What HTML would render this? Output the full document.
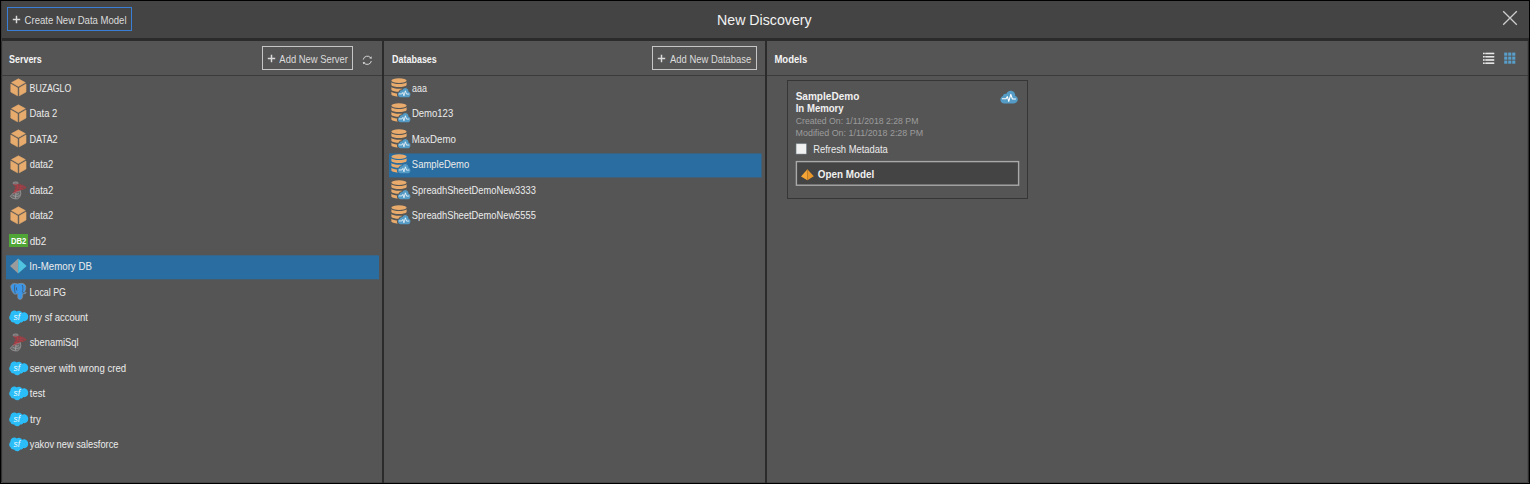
<!DOCTYPE html>
<html lang="en"><head><meta charset="utf-8"><title>New Discovery</title>
<style>
html,body{margin:0;padding:0}
body{width:1530px;height:484px;background:#000;overflow:hidden;position:relative;font-family:"Liberation Sans", sans-serif;}
div,span,svg{position:absolute;box-sizing:border-box}
.t{white-space:pre;line-height:1;transform-origin:0 0;}
.ic{overflow:visible}
.db2{width:19px;height:13px;background:#4fa636}
.db2 span{left:2px;top:3px;font-size:8.5px;line-height:1;font-weight:bold;color:#fff;transform-origin:0 0;transform:scaleX(0.9);white-space:pre}
</style></head>
<body>
<div style="left:1px;top:1px;width:1528px;height:37px;background:#444"></div>
<div style="left:1px;top:38px;width:1528px;height:3px;background:#2b2b2b"></div>
<div style="left:1px;top:41px;width:1527px;height:442px;background:#555"></div>
<div style="left:1px;top:1px;width:1px;height:40px;background:#3a3a3a"></div>
<div style="left:1px;top:41px;width:1px;height:442px;background:#303030"></div>
<div style="left:2px;top:41px;width:1px;height:441px;background:#505050"></div>
<div style="left:1527px;top:41px;width:1px;height:442px;background:#4b4b4b"></div>
<div style="left:1528px;top:41px;width:1px;height:442px;background:#2c2c2c"></div>
<div style="left:1px;top:482px;width:1528px;height:1px;background:#474747"></div>
<div style="left:1px;top:75px;width:1527px;height:1px;background:#3b3b3b"></div>
<div style="left:382px;top:41px;width:2px;height:442px;background:#2b2b2b"></div>
<div style="left:765px;top:41px;width:2px;height:442px;background:#2b2b2b"></div>
<div style="left:0;top:483px;width:1530px;height:1px;background:#000"></div>
<div style="left:7px;top:7px;width:125px;height:24px;border:1px solid #3a7fd6;background:#454545"></div>
<div style="left:262px;top:46px;width:91px;height:24px;border:1px solid #c6c6c6"></div>
<div style="left:652px;top:46px;width:105px;height:24px;border:1px solid #c6c6c6"></div>
<svg class="ic" style="left:12px;top:15.2px" width="9" height="9" viewBox="0 0 9 9"><path d="M4.5 0.8 V8.2 M0.8 4.5 H8.2" stroke="#dadada" stroke-width="1.45" fill="none"/></svg>
<svg class="ic" style="left:267px;top:53.9px" width="9" height="9" viewBox="0 0 9 9"><path d="M4.5 0.8 V8.2 M0.8 4.5 H8.2" stroke="#dadada" stroke-width="1.45" fill="none"/></svg>
<svg class="ic" style="left:657px;top:53.9px" width="9" height="9" viewBox="0 0 9 9"><path d="M4.5 0.8 V8.2 M0.8 4.5 H8.2" stroke="#dadada" stroke-width="1.45" fill="none"/></svg>
<svg class="ic" style="left:362.3px;top:54.6px" width="10.6" height="10.6" viewBox="0 0 12 12"><path d="M1.4 5.2 A4.7 4.7 0 0 1 9.8 3.2 M10.6 6.8 A4.7 4.7 0 0 1 2.2 8.8" fill="none" stroke="#d8d8d8" stroke-width="1.1"/><path d="M8.2 3.6 L11 4.2 L10.8 1.4 Z M3.8 8.4 L1 7.8 L1.2 10.6 Z" fill="#d8d8d8"/></svg>
<svg class="ic" style="left:1502px;top:10px" width="16" height="16" viewBox="0 0 16 16"><path d="M1.2 1.2 L14.8 14.8 M14.8 1.2 L1.2 14.8" stroke="#cdcdcd" stroke-width="1.3" fill="none"/></svg>
<svg class="ic" style="left:1483px;top:52px" width="12" height="12" viewBox="0 0 12 12"><rect x="0" y="0.80" width="11.2" height="1.35" fill="#b8b8b8"/><rect x="0" y="0.80" width="1.3" height="1.35" fill="#e8e8e8"/><rect x="2.6" y="0.80" width="8.6" height="1.35" fill="#e8e8e8"/><rect x="0" y="4.05" width="11.2" height="1.35" fill="#b8b8b8"/><rect x="0" y="4.05" width="1.3" height="1.35" fill="#e8e8e8"/><rect x="2.6" y="4.05" width="8.6" height="1.35" fill="#e8e8e8"/><rect x="0" y="7.30" width="11.2" height="1.35" fill="#b8b8b8"/><rect x="0" y="7.30" width="1.3" height="1.35" fill="#e8e8e8"/><rect x="2.6" y="7.30" width="8.6" height="1.35" fill="#e8e8e8"/><rect x="0" y="10.55" width="11.2" height="1.35" fill="#b8b8b8"/><rect x="0" y="10.55" width="1.3" height="1.35" fill="#e8e8e8"/><rect x="2.6" y="10.55" width="8.6" height="1.35" fill="#e8e8e8"/></svg>
<svg class="ic" style="left:1504px;top:52px" width="12" height="12" viewBox="0 0 12 12"><rect x="0.20" y="0.60" width="3.1" height="3.1" fill="#589fcb"/><rect x="4.20" y="0.60" width="3.1" height="3.1" fill="#589fcb"/><rect x="8.20" y="0.60" width="3.1" height="3.1" fill="#589fcb"/><rect x="0.20" y="4.60" width="3.1" height="3.1" fill="#589fcb"/><rect x="4.20" y="4.60" width="3.1" height="3.1" fill="#589fcb"/><rect x="8.20" y="4.60" width="3.1" height="3.1" fill="#589fcb"/><rect x="0.20" y="8.60" width="3.1" height="3.1" fill="#589fcb"/><rect x="4.20" y="8.60" width="3.1" height="3.1" fill="#589fcb"/><rect x="8.20" y="8.60" width="3.1" height="3.1" fill="#589fcb"/></svg>
<svg class="ic" style="left:0;top:0" width="1530" height="484" viewBox="0 0 1530 484"><rect x="6" y="255.3" width="373" height="24" fill="#2a6da0"/><rect x="389" y="153.45" width="372.5" height="24" fill="#2a6da0"/></svg>
<svg class="ic" style="left:10.3px;top:78.35px" width="17" height="19" viewBox="0 0 17 19"><g fill="#e6ab6d" stroke="#e6ab6d" stroke-width="0.6" stroke-linejoin="round"><path d="M8.4 0.8 L15.3 4.6 L8.4 8.5 L1.5 4.6 Z"/><path d="M0.8 6 L7.5 9.8 V17.8 L0.8 14 Z"/><path d="M9.3 9.8 L16 6 V14 L9.3 17.8 Z"/></g></svg>
<svg class="ic" style="left:10.3px;top:103.8px" width="17" height="19" viewBox="0 0 17 19"><g fill="#e6ab6d" stroke="#e6ab6d" stroke-width="0.6" stroke-linejoin="round"><path d="M8.4 0.8 L15.3 4.6 L8.4 8.5 L1.5 4.6 Z"/><path d="M0.8 6 L7.5 9.8 V17.8 L0.8 14 Z"/><path d="M9.3 9.8 L16 6 V14 L9.3 17.8 Z"/></g></svg>
<svg class="ic" style="left:10.3px;top:129.25px" width="17" height="19" viewBox="0 0 17 19"><g fill="#e6ab6d" stroke="#e6ab6d" stroke-width="0.6" stroke-linejoin="round"><path d="M8.4 0.8 L15.3 4.6 L8.4 8.5 L1.5 4.6 Z"/><path d="M0.8 6 L7.5 9.8 V17.8 L0.8 14 Z"/><path d="M9.3 9.8 L16 6 V14 L9.3 17.8 Z"/></g></svg>
<svg class="ic" style="left:10.3px;top:154.7px" width="17" height="19" viewBox="0 0 17 19"><g fill="#e6ab6d" stroke="#e6ab6d" stroke-width="0.6" stroke-linejoin="round"><path d="M8.4 0.8 L15.3 4.6 L8.4 8.5 L1.5 4.6 Z"/><path d="M0.8 6 L7.5 9.8 V17.8 L0.8 14 Z"/><path d="M9.3 9.8 L16 6 V14 L9.3 17.8 Z"/></g></svg>
<svg class="ic" style="left:10px;top:180.75px" width="18" height="19" viewBox="0 0 18 19"><ellipse cx="5.6" cy="2.1" rx="2.7" ry="1.1" fill="#8a8a8a" fill-opacity="0.45" stroke="#a4a4a4" stroke-width="0.7"/><path d="M3.4 12.2 C1.8 13.4 0.6 14.6 0.3 15.4 C1.6 17.4 4.6 18.2 7.6 17.8 C9.6 16.8 10.8 14.6 10.8 12.4 L10.4 9.6 L6.6 10.6 Z" fill="#9a9a9a" fill-opacity="0.3" stroke="#a2a2a2" stroke-width="0.7"/><path d="M2.6 14.2 C4.6 15.6 7.4 15.8 9.8 14.6 M5.2 12.6 C6.2 13.4 7.8 13.4 9 12.6 M6 11.6 L5.4 17.6" fill="none" stroke="#b0b0b0" stroke-width="0.6"/><path d="M3.2 3.2 C6 3.6 8.6 3.2 8.6 3.2 C11.6 3.6 14.6 4.6 16.4 6.4 C15 7.8 13 8.6 10.6 8.8 C8.6 9.6 6.6 11 5.4 12 L3 12 C4.2 10.4 5.2 8.4 5.4 6.6 C5.4 5.2 4.4 4.2 3.2 3.2 Z" fill="#c42e38" fill-opacity="0.3" stroke="#c8323c" stroke-width="0.5" stroke-opacity="0.75"/><path d="M5.6 4.8 C8.6 4.8 12.4 5.4 15.4 6.6 M5.6 7 C8 6.8 11 7.2 13 8.2 M4.6 9.6 C6.4 9.2 8.4 9.2 9.6 9.4 M7.6 3.6 C8 5.6 7.4 8.4 5.2 11.4 M10.8 4 C11.2 5.8 10.6 7.6 9.4 9.2" fill="none" stroke="#d03641" stroke-width="0.6" stroke-opacity="0.9"/></svg>
<svg class="ic" style="left:10.3px;top:205.6px" width="17" height="19" viewBox="0 0 17 19"><g fill="#e6ab6d" stroke="#e6ab6d" stroke-width="0.6" stroke-linejoin="round"><path d="M8.4 0.8 L15.3 4.6 L8.4 8.5 L1.5 4.6 Z"/><path d="M0.8 6 L7.5 9.8 V17.8 L0.8 14 Z"/><path d="M9.3 9.8 L16 6 V14 L9.3 17.8 Z"/></g></svg>
<div class="db2" style="left:9px;top:234.0px"><span>DB2</span></div>
<svg class="ic" style="left:10px;top:258.0px" width="18" height="16" viewBox="0 0 18 16"><path d="M0 8.1 L8.2 0.4 V15.6 Z" fill="#9b9b9b"/><path d="M8.2 0.4 L16.7 8 L8.2 15.6 Z" fill="#4fc3e0"/></svg>
<svg class="ic" style="left:10px;top:282.95px" width="17" height="17" viewBox="0 0 17 17"><path d="M2.6 0.9 C4.2 0.2 6.2 0.4 7.8 1 C9.8 0.2 12.6 0 14.4 1.2 C16.2 2.6 16 5.4 15.2 7.4 C14.8 8.4 14.4 9 14.2 9.2 C15 9.4 15.8 9.2 16.3 9.6 C15.8 10.8 14.2 11.2 13 10.6 C12.6 12 12.6 13.6 12.2 14.8 C11.8 16.4 9.8 17 8.6 16 C7.6 15.2 7.8 13.4 7.8 12 C7.8 11.4 7.6 10.8 7.4 10.6 C6.4 11.4 4.6 11.4 3.6 10.4 C2.2 8.8 1.2 6.4 0.8 4 C0.6 2.6 1.4 1.4 2.6 0.9 Z" fill="#3a96e9" stroke="#8d9093" stroke-width="0.7"/><path d="M4.9 1.6 C4.3 4 4.5 8 5.3 10.4 M12.2 2 C13.2 4 13 7 12.2 9.2 M12.4 10 L14.4 9.4" fill="none" stroke="#46525f" stroke-width="0.9" stroke-opacity="0.85"/><path d="M6.6 4.4 C6.2 5.6 6.4 6.6 6.8 7.4" fill="none" stroke="#3d4a58" stroke-width="0.9" stroke-opacity="0.8"/></svg>
<svg class="ic" style="left:8.5px;top:309.7px" width="20" height="15" viewBox="0 0 20 15"><path d="M1.6 3.6 C1.8 1.4 4 0 6 0.6 C6.8 0.8 7.4 1.2 7.8 1.6 C8.8 0.4 10.8 0.4 12 1.4 C12.4 1.8 12.8 2.2 13 2.8 C14.6 1.8 17 2.2 18.2 3.8 C19.6 5.6 19.6 8.2 18.2 9.8 C17.2 11 15.6 11.4 14.2 11 C13.8 12.2 12.4 12.8 11.2 12.4 C10.2 14.2 8 14.8 6.4 13.8 C5.8 13.4 5.4 13 5.2 12.4 C3.6 12.8 2 11.8 1.6 10.2 C0.2 9.4 -0.2 7.4 0.6 6 C0.8 5.6 1 5.4 1.2 5.2 C1.2 4.6 1.4 4 1.6 3.6 Z" fill="#2bbdf8"/><text x="4.6" y="10" font-family="Liberation Sans, sans-serif" font-size="8.5" font-style="italic" fill="#ffffff" fill-opacity="0.92">sf</text></svg>
<svg class="ic" style="left:10px;top:333.45px" width="18" height="19" viewBox="0 0 18 19"><ellipse cx="5.6" cy="2.1" rx="2.7" ry="1.1" fill="#8a8a8a" fill-opacity="0.45" stroke="#a4a4a4" stroke-width="0.7"/><path d="M3.4 12.2 C1.8 13.4 0.6 14.6 0.3 15.4 C1.6 17.4 4.6 18.2 7.6 17.8 C9.6 16.8 10.8 14.6 10.8 12.4 L10.4 9.6 L6.6 10.6 Z" fill="#9a9a9a" fill-opacity="0.3" stroke="#a2a2a2" stroke-width="0.7"/><path d="M2.6 14.2 C4.6 15.6 7.4 15.8 9.8 14.6 M5.2 12.6 C6.2 13.4 7.8 13.4 9 12.6 M6 11.6 L5.4 17.6" fill="none" stroke="#b0b0b0" stroke-width="0.6"/><path d="M3.2 3.2 C6 3.6 8.6 3.2 8.6 3.2 C11.6 3.6 14.6 4.6 16.4 6.4 C15 7.8 13 8.6 10.6 8.8 C8.6 9.6 6.6 11 5.4 12 L3 12 C4.2 10.4 5.2 8.4 5.4 6.6 C5.4 5.2 4.4 4.2 3.2 3.2 Z" fill="#c42e38" fill-opacity="0.3" stroke="#c8323c" stroke-width="0.5" stroke-opacity="0.75"/><path d="M5.6 4.8 C8.6 4.8 12.4 5.4 15.4 6.6 M5.6 7 C8 6.8 11 7.2 13 8.2 M4.6 9.6 C6.4 9.2 8.4 9.2 9.6 9.4 M7.6 3.6 C8 5.6 7.4 8.4 5.2 11.4 M10.8 4 C11.2 5.8 10.6 7.6 9.4 9.2" fill="none" stroke="#d03641" stroke-width="0.6" stroke-opacity="0.9"/></svg>
<svg class="ic" style="left:8.5px;top:360.6px" width="20" height="15" viewBox="0 0 20 15"><path d="M1.6 3.6 C1.8 1.4 4 0 6 0.6 C6.8 0.8 7.4 1.2 7.8 1.6 C8.8 0.4 10.8 0.4 12 1.4 C12.4 1.8 12.8 2.2 13 2.8 C14.6 1.8 17 2.2 18.2 3.8 C19.6 5.6 19.6 8.2 18.2 9.8 C17.2 11 15.6 11.4 14.2 11 C13.8 12.2 12.4 12.8 11.2 12.4 C10.2 14.2 8 14.8 6.4 13.8 C5.8 13.4 5.4 13 5.2 12.4 C3.6 12.8 2 11.8 1.6 10.2 C0.2 9.4 -0.2 7.4 0.6 6 C0.8 5.6 1 5.4 1.2 5.2 C1.2 4.6 1.4 4 1.6 3.6 Z" fill="#2bbdf8"/><text x="4.6" y="10" font-family="Liberation Sans, sans-serif" font-size="8.5" font-style="italic" fill="#ffffff" fill-opacity="0.92">sf</text></svg>
<svg class="ic" style="left:8.5px;top:386.05px" width="20" height="15" viewBox="0 0 20 15"><path d="M1.6 3.6 C1.8 1.4 4 0 6 0.6 C6.8 0.8 7.4 1.2 7.8 1.6 C8.8 0.4 10.8 0.4 12 1.4 C12.4 1.8 12.8 2.2 13 2.8 C14.6 1.8 17 2.2 18.2 3.8 C19.6 5.6 19.6 8.2 18.2 9.8 C17.2 11 15.6 11.4 14.2 11 C13.8 12.2 12.4 12.8 11.2 12.4 C10.2 14.2 8 14.8 6.4 13.8 C5.8 13.4 5.4 13 5.2 12.4 C3.6 12.8 2 11.8 1.6 10.2 C0.2 9.4 -0.2 7.4 0.6 6 C0.8 5.6 1 5.4 1.2 5.2 C1.2 4.6 1.4 4 1.6 3.6 Z" fill="#2bbdf8"/><text x="4.6" y="10" font-family="Liberation Sans, sans-serif" font-size="8.5" font-style="italic" fill="#ffffff" fill-opacity="0.92">sf</text></svg>
<svg class="ic" style="left:8.5px;top:411.5px" width="20" height="15" viewBox="0 0 20 15"><path d="M1.6 3.6 C1.8 1.4 4 0 6 0.6 C6.8 0.8 7.4 1.2 7.8 1.6 C8.8 0.4 10.8 0.4 12 1.4 C12.4 1.8 12.8 2.2 13 2.8 C14.6 1.8 17 2.2 18.2 3.8 C19.6 5.6 19.6 8.2 18.2 9.8 C17.2 11 15.6 11.4 14.2 11 C13.8 12.2 12.4 12.8 11.2 12.4 C10.2 14.2 8 14.8 6.4 13.8 C5.8 13.4 5.4 13 5.2 12.4 C3.6 12.8 2 11.8 1.6 10.2 C0.2 9.4 -0.2 7.4 0.6 6 C0.8 5.6 1 5.4 1.2 5.2 C1.2 4.6 1.4 4 1.6 3.6 Z" fill="#2bbdf8"/><text x="4.6" y="10" font-family="Liberation Sans, sans-serif" font-size="8.5" font-style="italic" fill="#ffffff" fill-opacity="0.92">sf</text></svg>
<svg class="ic" style="left:8.5px;top:436.95px" width="20" height="15" viewBox="0 0 20 15"><path d="M1.6 3.6 C1.8 1.4 4 0 6 0.6 C6.8 0.8 7.4 1.2 7.8 1.6 C8.8 0.4 10.8 0.4 12 1.4 C12.4 1.8 12.8 2.2 13 2.8 C14.6 1.8 17 2.2 18.2 3.8 C19.6 5.6 19.6 8.2 18.2 9.8 C17.2 11 15.6 11.4 14.2 11 C13.8 12.2 12.4 12.8 11.2 12.4 C10.2 14.2 8 14.8 6.4 13.8 C5.8 13.4 5.4 13 5.2 12.4 C3.6 12.8 2 11.8 1.6 10.2 C0.2 9.4 -0.2 7.4 0.6 6 C0.8 5.6 1 5.4 1.2 5.2 C1.2 4.6 1.4 4 1.6 3.6 Z" fill="#2bbdf8"/><text x="4.6" y="10" font-family="Liberation Sans, sans-serif" font-size="8.5" font-style="italic" fill="#ffffff" fill-opacity="0.92">sf</text></svg>
<svg class="ic" style="left:391px;top:77.75px" width="20" height="20" viewBox="0 0 20 20"><g fill="#e9ab6c"><ellipse cx="8" cy="2.6" rx="7.6" ry="2.3"/><path d="M0.4 4.2 C2 6.6 14 6.6 15.6 4.2 V7.2 C14 9.6 2 9.6 0.4 7.2 Z"/><path d="M0.4 9 C2 11.4 14 11.4 15.6 9 V12 C14 14.4 2 14.4 0.4 12 Z"/><path d="M0.4 13.8 C2 16.2 14 16.2 15.6 13.8 V16.8 C14 19.2 2 19.2 0.4 16.8 Z"/></g><g transform="translate(6.6 9.6) scale(0.72)"><path d="M4.4 13.4 C1.8 13.4 0.2 11.6 0.4 9.4 C0.4 7.6 1.6 6.4 3 6 C3.2 4.2 4.8 3.4 6.2 4 C7 1.6 9.4 0.2 11.8 0.8 C14.2 1.4 15.4 3.6 15.2 5.8 C17 6.4 18 8 17.8 9.8 C17.6 12 16 13.4 13.8 13.4 Z" fill="#555555" stroke="#555555" stroke-width="2.6"/><path d="M4.4 13.4 C1.8 13.4 0.2 11.6 0.4 9.4 C0.4 7.6 1.6 6.4 3 6 C3.2 4.2 4.8 3.4 6.2 4 C7 1.6 9.4 0.2 11.8 0.8 C14.2 1.4 15.4 3.6 15.2 5.8 C17 6.4 18 8 17.8 9.8 C17.6 12 16 13.4 13.8 13.4 Z" fill="#549bc6"/><path d="M2.4 8.8 H6 L7.4 6.6 L8.8 11.4 L10.8 4.4 L12.4 9 H15.6" fill="none" stroke="#ffffff" stroke-width="1.05" stroke-linejoin="round" stroke-linecap="round"/></g></svg>
<svg class="ic" style="left:391px;top:103.2px" width="20" height="20" viewBox="0 0 20 20"><g fill="#e9ab6c"><ellipse cx="8" cy="2.6" rx="7.6" ry="2.3"/><path d="M0.4 4.2 C2 6.6 14 6.6 15.6 4.2 V7.2 C14 9.6 2 9.6 0.4 7.2 Z"/><path d="M0.4 9 C2 11.4 14 11.4 15.6 9 V12 C14 14.4 2 14.4 0.4 12 Z"/><path d="M0.4 13.8 C2 16.2 14 16.2 15.6 13.8 V16.8 C14 19.2 2 19.2 0.4 16.8 Z"/></g><g transform="translate(6.6 9.6) scale(0.72)"><path d="M4.4 13.4 C1.8 13.4 0.2 11.6 0.4 9.4 C0.4 7.6 1.6 6.4 3 6 C3.2 4.2 4.8 3.4 6.2 4 C7 1.6 9.4 0.2 11.8 0.8 C14.2 1.4 15.4 3.6 15.2 5.8 C17 6.4 18 8 17.8 9.8 C17.6 12 16 13.4 13.8 13.4 Z" fill="#555555" stroke="#555555" stroke-width="2.6"/><path d="M4.4 13.4 C1.8 13.4 0.2 11.6 0.4 9.4 C0.4 7.6 1.6 6.4 3 6 C3.2 4.2 4.8 3.4 6.2 4 C7 1.6 9.4 0.2 11.8 0.8 C14.2 1.4 15.4 3.6 15.2 5.8 C17 6.4 18 8 17.8 9.8 C17.6 12 16 13.4 13.8 13.4 Z" fill="#549bc6"/><path d="M2.4 8.8 H6 L7.4 6.6 L8.8 11.4 L10.8 4.4 L12.4 9 H15.6" fill="none" stroke="#ffffff" stroke-width="1.05" stroke-linejoin="round" stroke-linecap="round"/></g></svg>
<svg class="ic" style="left:391px;top:128.65px" width="20" height="20" viewBox="0 0 20 20"><g fill="#e9ab6c"><ellipse cx="8" cy="2.6" rx="7.6" ry="2.3"/><path d="M0.4 4.2 C2 6.6 14 6.6 15.6 4.2 V7.2 C14 9.6 2 9.6 0.4 7.2 Z"/><path d="M0.4 9 C2 11.4 14 11.4 15.6 9 V12 C14 14.4 2 14.4 0.4 12 Z"/><path d="M0.4 13.8 C2 16.2 14 16.2 15.6 13.8 V16.8 C14 19.2 2 19.2 0.4 16.8 Z"/></g><g transform="translate(6.6 9.6) scale(0.72)"><path d="M4.4 13.4 C1.8 13.4 0.2 11.6 0.4 9.4 C0.4 7.6 1.6 6.4 3 6 C3.2 4.2 4.8 3.4 6.2 4 C7 1.6 9.4 0.2 11.8 0.8 C14.2 1.4 15.4 3.6 15.2 5.8 C17 6.4 18 8 17.8 9.8 C17.6 12 16 13.4 13.8 13.4 Z" fill="#555555" stroke="#555555" stroke-width="2.6"/><path d="M4.4 13.4 C1.8 13.4 0.2 11.6 0.4 9.4 C0.4 7.6 1.6 6.4 3 6 C3.2 4.2 4.8 3.4 6.2 4 C7 1.6 9.4 0.2 11.8 0.8 C14.2 1.4 15.4 3.6 15.2 5.8 C17 6.4 18 8 17.8 9.8 C17.6 12 16 13.4 13.8 13.4 Z" fill="#549bc6"/><path d="M2.4 8.8 H6 L7.4 6.6 L8.8 11.4 L10.8 4.4 L12.4 9 H15.6" fill="none" stroke="#ffffff" stroke-width="1.05" stroke-linejoin="round" stroke-linecap="round"/></g></svg>
<svg class="ic" style="left:391px;top:154.1px" width="20" height="20" viewBox="0 0 20 20"><g fill="#e9ab6c"><ellipse cx="8" cy="2.6" rx="7.6" ry="2.3"/><path d="M0.4 4.2 C2 6.6 14 6.6 15.6 4.2 V7.2 C14 9.6 2 9.6 0.4 7.2 Z"/><path d="M0.4 9 C2 11.4 14 11.4 15.6 9 V12 C14 14.4 2 14.4 0.4 12 Z"/><path d="M0.4 13.8 C2 16.2 14 16.2 15.6 13.8 V16.8 C14 19.2 2 19.2 0.4 16.8 Z"/></g><g transform="translate(6.6 9.6) scale(0.72)"><path d="M4.4 13.4 C1.8 13.4 0.2 11.6 0.4 9.4 C0.4 7.6 1.6 6.4 3 6 C3.2 4.2 4.8 3.4 6.2 4 C7 1.6 9.4 0.2 11.8 0.8 C14.2 1.4 15.4 3.6 15.2 5.8 C17 6.4 18 8 17.8 9.8 C17.6 12 16 13.4 13.8 13.4 Z" fill="#2a6da0" stroke="#2a6da0" stroke-width="2.6"/><path d="M4.4 13.4 C1.8 13.4 0.2 11.6 0.4 9.4 C0.4 7.6 1.6 6.4 3 6 C3.2 4.2 4.8 3.4 6.2 4 C7 1.6 9.4 0.2 11.8 0.8 C14.2 1.4 15.4 3.6 15.2 5.8 C17 6.4 18 8 17.8 9.8 C17.6 12 16 13.4 13.8 13.4 Z" fill="#549bc6"/><path d="M2.4 8.8 H6 L7.4 6.6 L8.8 11.4 L10.8 4.4 L12.4 9 H15.6" fill="none" stroke="#ffffff" stroke-width="1.05" stroke-linejoin="round" stroke-linecap="round"/></g></svg>
<svg class="ic" style="left:391px;top:179.55px" width="20" height="20" viewBox="0 0 20 20"><g fill="#e9ab6c"><ellipse cx="8" cy="2.6" rx="7.6" ry="2.3"/><path d="M0.4 4.2 C2 6.6 14 6.6 15.6 4.2 V7.2 C14 9.6 2 9.6 0.4 7.2 Z"/><path d="M0.4 9 C2 11.4 14 11.4 15.6 9 V12 C14 14.4 2 14.4 0.4 12 Z"/><path d="M0.4 13.8 C2 16.2 14 16.2 15.6 13.8 V16.8 C14 19.2 2 19.2 0.4 16.8 Z"/></g><g transform="translate(6.6 9.6) scale(0.72)"><path d="M4.4 13.4 C1.8 13.4 0.2 11.6 0.4 9.4 C0.4 7.6 1.6 6.4 3 6 C3.2 4.2 4.8 3.4 6.2 4 C7 1.6 9.4 0.2 11.8 0.8 C14.2 1.4 15.4 3.6 15.2 5.8 C17 6.4 18 8 17.8 9.8 C17.6 12 16 13.4 13.8 13.4 Z" fill="#555555" stroke="#555555" stroke-width="2.6"/><path d="M4.4 13.4 C1.8 13.4 0.2 11.6 0.4 9.4 C0.4 7.6 1.6 6.4 3 6 C3.2 4.2 4.8 3.4 6.2 4 C7 1.6 9.4 0.2 11.8 0.8 C14.2 1.4 15.4 3.6 15.2 5.8 C17 6.4 18 8 17.8 9.8 C17.6 12 16 13.4 13.8 13.4 Z" fill="#549bc6"/><path d="M2.4 8.8 H6 L7.4 6.6 L8.8 11.4 L10.8 4.4 L12.4 9 H15.6" fill="none" stroke="#ffffff" stroke-width="1.05" stroke-linejoin="round" stroke-linecap="round"/></g></svg>
<svg class="ic" style="left:391px;top:205.0px" width="20" height="20" viewBox="0 0 20 20"><g fill="#e9ab6c"><ellipse cx="8" cy="2.6" rx="7.6" ry="2.3"/><path d="M0.4 4.2 C2 6.6 14 6.6 15.6 4.2 V7.2 C14 9.6 2 9.6 0.4 7.2 Z"/><path d="M0.4 9 C2 11.4 14 11.4 15.6 9 V12 C14 14.4 2 14.4 0.4 12 Z"/><path d="M0.4 13.8 C2 16.2 14 16.2 15.6 13.8 V16.8 C14 19.2 2 19.2 0.4 16.8 Z"/></g><g transform="translate(6.6 9.6) scale(0.72)"><path d="M4.4 13.4 C1.8 13.4 0.2 11.6 0.4 9.4 C0.4 7.6 1.6 6.4 3 6 C3.2 4.2 4.8 3.4 6.2 4 C7 1.6 9.4 0.2 11.8 0.8 C14.2 1.4 15.4 3.6 15.2 5.8 C17 6.4 18 8 17.8 9.8 C17.6 12 16 13.4 13.8 13.4 Z" fill="#555555" stroke="#555555" stroke-width="2.6"/><path d="M4.4 13.4 C1.8 13.4 0.2 11.6 0.4 9.4 C0.4 7.6 1.6 6.4 3 6 C3.2 4.2 4.8 3.4 6.2 4 C7 1.6 9.4 0.2 11.8 0.8 C14.2 1.4 15.4 3.6 15.2 5.8 C17 6.4 18 8 17.8 9.8 C17.6 12 16 13.4 13.8 13.4 Z" fill="#549bc6"/><path d="M2.4 8.8 H6 L7.4 6.6 L8.8 11.4 L10.8 4.4 L12.4 9 H15.6" fill="none" stroke="#ffffff" stroke-width="1.05" stroke-linejoin="round" stroke-linecap="round"/></g></svg>
<div style="left:787px;top:80px;width:241px;height:119px;border:1px solid #363636;background:#555"></div>
<svg class="ic" style="left:1000.0px;top:90.3px" width="18.2" height="13.8" viewBox="0 0 18.2 13.8"><path d="M4.4 13.4 C1.8 13.4 0.2 11.6 0.4 9.4 C0.4 7.6 1.6 6.4 3 6 C3.2 4.2 4.8 3.4 6.2 4 C7 1.6 9.4 0.2 11.8 0.8 C14.2 1.4 15.4 3.6 15.2 5.8 C17 6.4 18 8 17.8 9.8 C17.6 12 16 13.4 13.8 13.4 Z" fill="#549bc6"/><path d="M2.4 8.8 H6 L7.4 6.6 L8.8 11.4 L10.8 4.4 L12.4 9 H15.6" fill="none" stroke="#ffffff" stroke-width="1.1" stroke-linejoin="round" stroke-linecap="round"/></svg>
<svg class="ic" style="left:795px;top:143px" width="13" height="13" viewBox="0 0 13 13"><rect x="1.1" y="0.8" width="10.2" height="10.2" fill="#f1f1f1" stroke="#8a9aa4" stroke-width="0.5"/></svg>
<svg class="ic" style="left:790px;top:156px" width="236" height="36" viewBox="0 0 236 36"><rect x="6.4" y="5.6" width="222.2" height="23.6" fill="#444444" stroke="#a9a9a9" stroke-width="1.4"/></svg>
<svg class="ic" style="left:801px;top:169px" width="13" height="12" viewBox="0 0 13 12"><path d="M6.4 0.2 L0 7.5 L6.4 11.2 Z" fill="#f6a636"/><path d="M6.4 0.2 L12.8 7.3 L6.4 11.2 Z" fill="#e9962a"/><path d="M6.4 0.2 V11.2" stroke="#c07d1e" stroke-width="0.5"/></svg>
<span class="t" style="left:24px;top:14.75px;font-size:10.5px;font-weight:normal;color:#dcdcdc;transform:translateX(0.61px) scaleX(0.9098)">Create New Data Model</span>
<span class="t" style="left:717px;top:12.00px;font-size:15px;font-weight:normal;color:#f2f2f2;transform:translateX(0.02px) scaleX(0.9464)">New Discovery</span>
<span class="t" style="left:8px;top:53.75px;font-size:10.5px;font-weight:bold;color:#f4f4f4;transform:translateX(0.93px) scaleX(0.8544)">Servers</span>
<span class="t" style="left:279px;top:53.75px;font-size:10.5px;font-weight:normal;color:#dcdcdc;transform:translateX(0.36px) scaleX(0.8973)">Add New Server</span>
<span class="t" style="left:392px;top:53.75px;font-size:10.5px;font-weight:bold;color:#f4f4f4;transform:translateX(0.04px) scaleX(0.8525)">Databases</span>
<span class="t" style="left:670px;top:53.75px;font-size:10.5px;font-weight:normal;color:#dcdcdc;transform:translateX(0.03px) scaleX(0.8974)">Add New Database</span>
<span class="t" style="left:774px;top:53.75px;font-size:10.5px;font-weight:bold;color:#f4f4f4;transform:translateX(0.38px) scaleX(0.9078)">Models</span>
<span class="t" style="left:29px;top:82.75px;font-size:10.5px;font-weight:normal;color:#ececec;transform:translateX(0.60px) scaleX(0.8294)">BUZAGLO</span>
<span class="t" style="left:29px;top:107.75px;font-size:10.5px;font-weight:normal;color:#ececec;transform:translateX(0.50px) scaleX(0.8983)">Data 2</span>
<span class="t" style="left:29px;top:133.75px;font-size:10.5px;font-weight:normal;color:#ececec;transform:translateX(0.53px) scaleX(0.8678)">DATA2</span>
<span class="t" style="left:29px;top:158.75px;font-size:10.5px;font-weight:normal;color:#ececec;transform:translateX(0.75px) scaleX(0.8955)">data2</span>
<span class="t" style="left:29px;top:184.75px;font-size:10.5px;font-weight:normal;color:#ececec;transform:translateX(0.75px) scaleX(0.8955)">data2</span>
<span class="t" style="left:29px;top:209.75px;font-size:10.5px;font-weight:normal;color:#ececec;transform:translateX(0.75px) scaleX(0.8955)">data2</span>
<span class="t" style="left:29px;top:235.75px;font-size:10.5px;font-weight:normal;color:#ececec;transform:translateX(0.73px) scaleX(0.9354)">db2</span>
<span class="t" style="left:29px;top:260.75px;font-size:10.5px;font-weight:normal;color:#ececec;transform:translateX(0.34px) scaleX(0.9243)">In-Memory DB</span>
<span class="t" style="left:29px;top:286.75px;font-size:10.5px;font-weight:normal;color:#ececec;transform:translateX(0.56px) scaleX(0.8441)">Local PG</span>
<span class="t" style="left:29px;top:311.75px;font-size:10.5px;font-weight:normal;color:#ececec;transform:translateX(0.34px) scaleX(0.9044)">my sf account</span>
<span class="t" style="left:29px;top:336.75px;font-size:10.5px;font-weight:normal;color:#ececec;transform:translateX(0.70px) scaleX(0.8897)">sbenamiSql</span>
<span class="t" style="left:29px;top:362.75px;font-size:10.5px;font-weight:normal;color:#ececec;transform:translateX(0.66px) scaleX(0.9126)">server with wrong cred</span>
<span class="t" style="left:29px;top:387.75px;font-size:10.5px;font-weight:normal;color:#ececec;transform:translateX(0.86px) scaleX(0.8971)">test</span>
<span class="t" style="left:30px;top:413.75px;font-size:10.5px;font-weight:normal;color:#ececec;transform:translateX(0.02px) scaleX(0.9315)">try</span>
<span class="t" style="left:29px;top:438.75px;font-size:10.5px;font-weight:normal;color:#ececec;transform:translateX(0.82px) scaleX(0.8829)">yakov new salesforce</span>
<span class="t" style="left:412px;top:82.75px;font-size:10.5px;font-weight:normal;color:#ececec;transform:translateX(0.08px) scaleX(0.8483)">aaa</span>
<span class="t" style="left:411px;top:107.75px;font-size:10.5px;font-weight:normal;color:#ececec;transform:translateX(0.90px) scaleX(0.9069)">Demo123</span>
<span class="t" style="left:411px;top:133.75px;font-size:10.5px;font-weight:normal;color:#ececec;transform:translateX(0.75px) scaleX(0.9214)">MaxDemo</span>
<span class="t" style="left:411px;top:158.75px;font-size:10.5px;font-weight:normal;color:#ececec;transform:translateX(0.87px) scaleX(0.9016)">SampleDemo</span>
<span class="t" style="left:411px;top:184.75px;font-size:10.5px;font-weight:normal;color:#ececec;transform:translateX(0.87px) scaleX(0.8885)">SpreadhSheetDemoNew3333</span>
<span class="t" style="left:411px;top:209.75px;font-size:10.5px;font-weight:normal;color:#ececec;transform:translateX(0.87px) scaleX(0.8889)">SpreadhSheetDemoNew5555</span>
<span class="t" style="left:795px;top:90.50px;font-size:11px;font-weight:bold;color:#f0f0f0;transform:translateX(0.63px) scaleX(0.9136)">SampleDemo</span>
<span class="t" style="left:795px;top:102.75px;font-size:10.5px;font-weight:bold;color:#f0f0f0;transform:translateX(0.69px) scaleX(0.9141)">In Memory</span>
<span class="t" style="left:795px;top:116.50px;font-size:9px;font-weight:normal;color:#9c9c9c;transform:translateX(0.70px) scaleX(0.9669)">Created On: 1/11/2018 2:28 PM</span>
<span class="t" style="left:795px;top:128.50px;font-size:9px;font-weight:normal;color:#9c9c9c;transform:translateX(0.56px) scaleX(0.9892)">Modified On: 1/11/2018 2:28 PM</span>
<span class="t" style="left:813px;top:143.75px;font-size:10.5px;font-weight:normal;color:#ececec;transform:translateX(0.21px) scaleX(0.8939)">Refresh Metadata</span>
<span class="t" style="left:817px;top:168.75px;font-size:10.5px;font-weight:bold;color:#f0f0f0;transform:translateX(0.74px) scaleX(0.9392)">Open Model</span>
</body></html>
